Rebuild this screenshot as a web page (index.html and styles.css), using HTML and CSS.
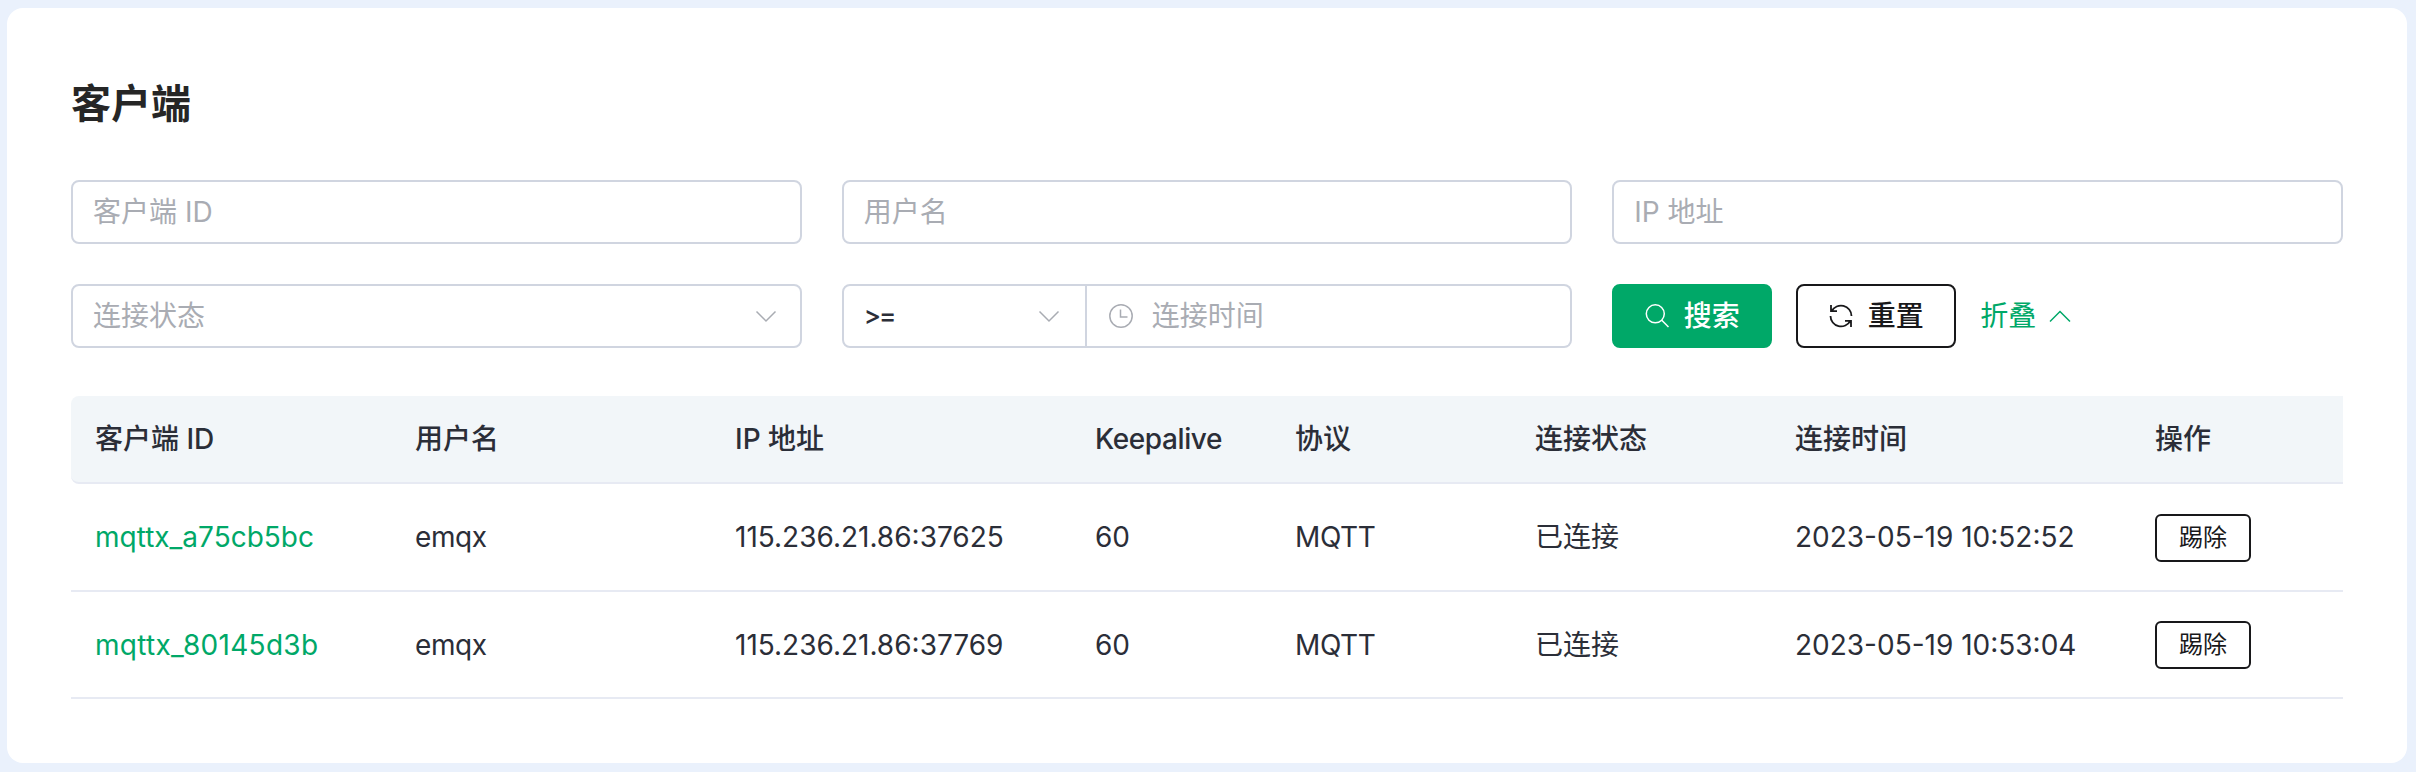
FILE: index.html
```html
<!DOCTYPE html>
<html lang="zh-CN">
<head>
<meta charset="utf-8">
<title>客户端</title>
<link rel="stylesheet" href="styles.css">
</head>
<body>
<main class="card">
  <h1 class="title">客户端</h1>
  <form class="filters">
    <div class="field">客户端 ID</div>
    <div class="field">用户名</div>
    <div class="field">IP 地址</div>
    <div class="field select"><span>连接状态</span>
      <svg class="icon chevron" viewBox="0 0 24 24"><path d="M2.500 7.500 12 17l9.500-9.500"/></svg>
    </div>
    <div class="group">
      <div class="field select operator"><span class="symbol">&gt;=</span>
        <svg class="icon chevron" viewBox="0 0 24 24"><path d="M2.500 7.500 12 17l9.500-9.500"/></svg>
      </div>
      <div class="field time">
        <svg class="icon" viewBox="0 0 24 24"><circle cx="12" cy="12" r="11.200"/><path d="M11.500 5.500v7.500h7"/></svg>
        <span>连接时间</span>
      </div>
    </div>
    <div class="actions">
      <button type="button" class="btn primary">
        <svg class="icon" viewBox="0 0 24 24"><circle cx="10.300" cy="9.800" r="9"/><path d="m16.800 16.300 6.700 6.700"/></svg>
        <span>搜索</span>
      </button>
      <button type="button" class="btn">
        <svg class="icon reset" viewBox="0 0 24 24"><path d="M2 1v6.200h6M2.700 7.200A10.500 10.500 0 0 1 22.500 12M22 23v-6.200h-6M21.300 16.800A10.500 10.500 0 0 1 1.500 12"/></svg>
        <span>重置</span>
      </button>
      <a class="fold"><span>折叠</span>
        <svg class="icon" viewBox="0 0 24 24"><path d="M2 17.500 12 7.500l10 10"/></svg>
      </a>
    </div>
  </form>
  <div class="table">
    <div class="row head">
      <div>客户端 ID</div><div>用户名</div><div>IP 地址</div><div class="tight">Keepalive</div><div>协议</div><div>连接状态</div><div>连接时间</div><div>操作</div>
    </div>
    <div class="row first">
      <div><a class="link">mqttx_a75cb5bc</a></div><div class="tight">emqx</div><div>115.236.21.86:37625</div><div>60</div><div class="tight">MQTT</div><div>已连接</div><div>2023-05-19 10:52:52</div><div><button type="button" class="kick">踢除</button></div>
    </div>
    <div class="row">
      <div><a class="link wide">mqttx_80145d3b</a></div><div class="tight">emqx</div><div>115.236.21.86:37769</div><div>60</div><div class="tight">MQTT</div><div>已连接</div><div>2023-05-19 10:53:04</div><div><button type="button" class="kick">踢除</button></div>
    </div>
  </div>
</main>
</body>
</html>
```
FILE: styles.css
```css
* { box-sizing: border-box; }
body {
  margin: 0;
  height: 772px;
  padding: 8px 9px 9px 7px;
  background: #eaf1fc;
  color: #2b2e38;
  font: 28px/40px Inter, "Noto Sans CJK SC", sans-serif;
}
.card {
  height: 755px;
  padding: 66px 64px 0;
  border-radius: 16px;
  background: #fff;
}
.title { margin: 0 0 46px; font-size: 40px; line-height: 60px; font-weight: 600; color: #262626; }
.filters { display: grid; grid-template-columns: repeat(3, 1fr); gap: 40px; margin-bottom: 48px; }
.field {
  display: flex;
  align-items: center;
  height: 64px;
  padding: 0 22px 1px 20px;
  border: 2px solid #d0d5e0;
  border-radius: 8px;
  color: #a9acb3;
}
.select { justify-content: space-between; }
.group { display: flex; }
.operator { width: 245px; padding-right: 24px; border-radius: 8px 0 0 8px; color: #2b2e38; font-weight: 500; }
.symbol { font-size: 26px; letter-spacing: -2px; }
.time { flex: 1; gap: 19px; padding-left: 22px; border-left: 0; border-radius: 0 8px 8px 0; }
.icon { flex: none; width: 24px; height: 24px; overflow: visible; fill: none; stroke: currentColor; stroke-width: 1.5; }
.chevron { color: #a9acb3; }
.reset { stroke-width: 1.8; }
.actions { display: flex; align-items: center; gap: 24px; }
.btn {
  display: flex;
  align-items: center;
  justify-content: center;
  gap: 15px;
  width: 160px;
  height: 64px;
  padding: 0 0 1px;
  border: 2px solid #18181a;
  border-radius: 8px;
  background: #fff;
  color: #18181a;
  font: inherit;
  font-weight: 500;
}
.primary { border-color: #00a868; background: #00a868; color: #fff; }
.fold { display: flex; align-items: center; gap: 12px; padding-bottom: 1px; color: #00a868; }
.row {
  display: grid;
  grid-template-columns: 320px 320px 360px 200px 240px 260px 360px 1fr;
  align-items: center;
  height: 107px;
  border-bottom: 2px solid #e7eaf3;
}
.row > div { padding-left: 24px; }
.first { height: 108px; }
.head { height: 88px; border-radius: 8px 0 0 8px; background: #f2f6f9; font-weight: 500; }
.tight { letter-spacing: -0.4px; }
.link { color: #00a868; }
.wide { letter-spacing: 0.3px; }
.kick {
  display: block;
  width: 96px;
  height: 48px;
  margin-top: 1px;
  padding: 0;
  border: 2px solid #18181a;
  border-radius: 6px;
  background: #fff;
  color: #18181a;
  font: inherit;
  font-size: 24px;
}
```
